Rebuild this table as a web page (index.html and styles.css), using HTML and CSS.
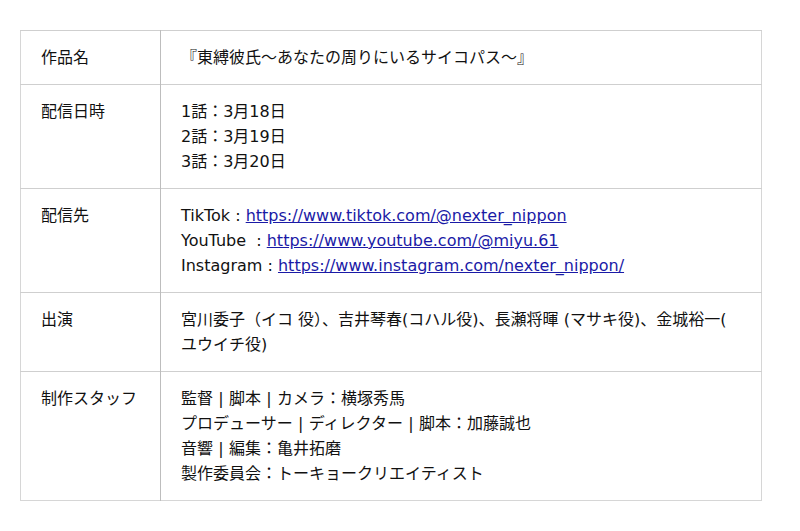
FILE: index.html
```html
<!DOCTYPE html>
<html lang="ja">
<head>
<meta charset="utf-8">
<link rel="stylesheet" href="styles.css">
</head>
<body>
<table class="info">
  <tr>
    <th>作品名</th>
    <td>『東縛彼氏～あなたの周りにいるサイコパス～』</td>
  </tr>
  <tr>
    <th>配信日時</th>
    <td>1話：3月18日<br>2話：3月19日<br>3話：3月20日</td>
  </tr>
  <tr>
    <th>配信先</th>
    <td>TikTok : <a href="#">https://www.tiktok.com/@nexter_nippon</a><br>YouTube&nbsp; : <a href="#">https://www.youtube.com/@miyu.61</a><br>Instagram : <a href="#">https://www.instagram.com/nexter_nippon/</a></td>
  </tr>
  <tr>
    <th>出演</th>
    <td class="cast">宮川委子（イコ 役）、吉井琴春(コハル役)、長瀬将暉 (マサキ役)、金城裕一(ユウイチ役)</td>
  </tr>
  <tr>
    <th>制作スタッフ</th>
    <td>監督<span class="sep">|</span>脚本<span class="sep">|</span>カメラ：横塚秀馬<br>プロデューサー<span class="sep">|</span>ディレクター<span class="sep">|</span>脚本：加藤誠也<br>音響<span class="sep">|</span>編集：亀井拓磨<br>製作委員会：トーキョークリエイティスト</td>
  </tr>
</table>
</body>
</html>
```
FILE: styles.css
```css
html, body {
  margin: 0;
  padding: 0;
  background: #fff;
}
body {
  padding: 30px 38px 0 20px;
  font-family: "DejaVu Sans", "Noto Sans CJK JP", sans-serif;
  font-size: 16px;
  line-height: 25px;
  color: #111;
}
.info {
  width: 742px;
  border-collapse: collapse;
  border: 1px solid #d6d6d6;
}
.info th, .info td {
  text-align: left;
  vertical-align: top;
  font-weight: normal;
  padding: 14px 20px;
  border-top: 1px solid #cfcfcf;
}
.info th {
  width: 99px;
  border-right: 1px solid #bdbdbd;
}
.info a {
  color: #1a1aa6;
  text-decoration: underline;
}
.cast {
  line-break: anywhere;
}
.sep {
  display: inline-block;
  width: 1em;
  text-align: center;
  font-family: "DejaVu Sans", sans-serif;
  color: #111;
}
```
